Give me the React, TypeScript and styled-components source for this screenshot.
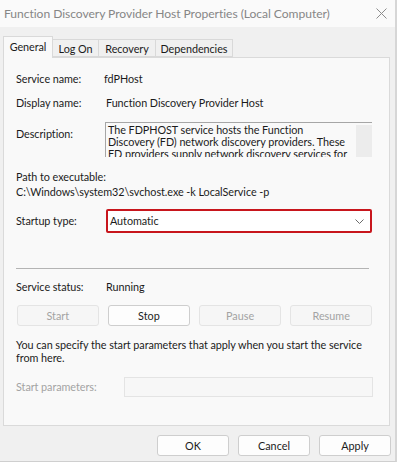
import * as React from "react";
import styled, { createGlobalStyle } from "styled-components";

const GlobalStyle = createGlobalStyle`
  html, body {
    margin: 0;
    padding: 0;
    background: #f0f0f0;
  }
  body {
    font-family: Lato, "Noto Sans", sans-serif;
  }
`;

const Window = styled.div`
  width: 397px;
  height: 462px;
  box-sizing: border-box;
  background: #f0f0f0;
  border-right: 2px solid #d6d6d6;
  border-bottom: 1px solid #cfcfcf;
  display: flex;
  flex-direction: column;
  font-size: 10.8px;
  letter-spacing: -0.05px;
  color: #1b1b1b;
`;

const TitleBar = styled.div`
  height: 27px;
  flex: none;
  background: #fafafa;
  display: flex;
  align-items: center;
  justify-content: space-between;
  padding: 0 8px 0 4px;
`;

const Title = styled.span`
  font-size: 12.1px;
  color: #868686;
  white-space: nowrap;
`;

const TabStrip = styled.div`
  display: flex;
  align-items: flex-end;
  height: 21px;
  margin-top: 9px;
  padding-left: 3px;
  position: relative;
  z-index: 1;
`;

const Tab = styled.div<{ $active?: boolean; $width: number }>`
  box-sizing: border-box;
  width: ${(p) => p.$width}px;
  height: ${(p) => (p.$active ? "22px" : "18px")};
  margin-bottom: ${(p) => (p.$active ? "-1px" : "0")};
  padding-bottom: ${(p) => (p.$active ? "3px" : "0")};
  border: 1px solid #d9d9d9;
  border-bottom: ${(p) => (p.$active ? "none" : "1px solid #d9d9d9")};
  border-left: ${(p) => (p.$active ? "1px solid #d9d9d9" : "none")};
  background: ${(p) => (p.$active ? "#f9f9f9" : "#f0f0f0")};
  display: flex;
  align-items: center;
  justify-content: center;
  white-space: nowrap;
`;

const Panel = styled.div`
  box-sizing: border-box;
  height: 369px;
  margin: 0 5px 0 3px;
  background: #f9f9f9;
  border: 1px solid #dadada;
  padding: 13px 17px 0 12px;
  display: flex;
  flex-direction: column;
`;

const InfoRow = styled.div<{ $top?: number; $label?: number }>`
  display: grid;
  grid-template-columns: ${(p) => p.$label ?? 88}px 1fr;
  align-items: center;
  line-height: 16px;
  margin-top: ${(p) => p.$top ?? 0}px;
  white-space: nowrap;
`;

const Label = styled.span<{ $disabled?: boolean; $offset?: number }>`
  color: ${(p) => (p.$disabled ? "#a3a3a3" : "#1b1b1b")};
  align-self: ${(p) => (p.$offset ? "start" : "center")};
  margin-top: ${(p) => p.$offset ?? 0}px;
`;

const Value = styled.span<{ $shift?: number }>`
  margin-left: ${(p) => p.$shift ?? 0}px;
`;

const DescBox = styled.div`
  margin-left: 1px;
  height: 35px;
  box-sizing: border-box;
  border-top: 1px solid #a6a6a6;
  border-left: 1px solid #a6a6a6;
  display: flex;
  overflow: hidden;
`;

const DescText = styled.div`
  flex: 1;
  padding: 1px 0 0 2px;
  line-height: 12px;
  white-space: nowrap;
`;

const ScrollTrack = styled.div`
  width: 16px;
  flex: none;
  margin-top: 2px;
  height: 32px;
  background: #ececec;
`;

const Block = styled.div<{ $top?: number }>`
  margin-top: ${(p) => p.$top ?? 0}px;
  line-height: 15px;
  white-space: nowrap;
`;

const Select = styled.div`
  margin-left: 2px;
  height: 24px;
  box-sizing: border-box;
  border: 2px solid #c8161d;
  border-radius: 2px;
  background: #ffffff;
  display: flex;
  align-items: center;
  justify-content: space-between;
  padding: 0 6px 0 2px;
`;

const Divider = styled.div<{ $top: number }>`
  margin-top: ${(p) => p.$top}px;
  height: 1px;
  width: 353px;
  background: #b4b4b4;
`;

const ButtonRow = styled.div`
  margin-top: 10px;
  margin-left: 1px;
  width: 355px;
  display: grid;
  grid-template-columns: repeat(4, 1fr);
  gap: 9.5px;
`;

const Button = styled.button<{ $disabled?: boolean }>`
  height: 21px;
  box-sizing: border-box;
  padding: 0;
  font-family: inherit;
  font-size: 10.8px;
  border-radius: 3px;
  border: 1px solid ${(p) => (p.$disabled ? "#e4e4e4" : "#cecece")};
  background: ${(p) => (p.$disabled ? "#f6f6f6" : "#fdfdfd")};
  color: ${(p) => (p.$disabled ? "#a3a3a3" : "#1b1b1b")};
`;

const Paragraph = styled.p`
  margin: 12px 0 0;
  line-height: 13px;
  width: 360px;
`;

const ParamInput = styled.div`
  height: 20px;
  box-sizing: border-box;
  border: 1px solid #e4e4e4;
  background: #f7f7f7;
  width: 249px;
`;

const Footer = styled.div`
  display: flex;
  justify-content: flex-end;
  gap: 9px;
  margin-top: 9px;
  padding-right: 4px;
`;

const FooterButton = styled(Button)`
  width: 72px;
`;

const CloseIcon = () => (
  <svg width="11" height="11" viewBox="0 0 11 11">
    <path d="M0.5 0.5 L10.5 10.5 M10.5 0.5 L0.5 10.5" stroke="#8c8c8c" strokeWidth="1" fill="none" />
  </svg>
);

const Chevron = () => (
  <svg width="9" height="5" viewBox="0 0 9 5">
    <path d="M0.5 0.5 L4.5 4.5 L8.5 0.5" stroke="#6a6a6a" strokeWidth="1" fill="none" />
  </svg>
);

const tabs = [
  { name: "General", width: 50 },
  { name: "Log On", width: 46 },
  { name: "Recovery", width: 57 },
  { name: "Dependencies", width: 77 },
];

const App: React.FC = () => {
  return (
    <Window>
      <GlobalStyle />
      <TitleBar>
        <Title>Function Discovery Provider Host Properties (Local Computer)</Title>
        <CloseIcon />
      </TitleBar>
      <TabStrip>
        {tabs.map((t, i) => (
          <Tab key={t.name} $active={i === 0} $width={t.width}>
            {t.name}
          </Tab>
        ))}
      </TabStrip>
      <Panel>
        <InfoRow>
          <Label>Service name:</Label>
          <Value>fdPHost</Value>
        </InfoRow>
        <InfoRow $top={8}>
          <Label>Display name:</Label>
          <Value $shift={2}>Function Discovery Provider Host</Value>
        </InfoRow>
        <InfoRow $top={11}>
          <Label $offset={4}>Description:</Label>
          <DescBox>
            <DescText>
              The FDPHOST service hosts the Function
              <br />
              Discovery (FD) network discovery providers. These
              <br />
              FD providers supply network discovery services for
            </DescText>
            <ScrollTrack />
          </DescBox>
        </InfoRow>
        <Block $top={12}>Path to executable:</Block>
        <Block>C:\Windows\system32\svchost.exe -k LocalService -p</Block>
        <InfoRow $top={10}>
          <Label>Startup type:</Label>
          <Select>
            <span>Automatic</span>
            <Chevron />
          </Select>
        </InfoRow>
        <Divider $top={35} />
        <InfoRow $top={10}>
          <Label>Service status:</Label>
          <Value $shift={2}>Running</Value>
        </InfoRow>
        <ButtonRow>
          <Button $disabled>Start</Button>
          <Button>Stop</Button>
          <Button $disabled>Pause</Button>
          <Button $disabled>Resume</Button>
        </ButtonRow>
        <Paragraph>
          You can specify the start parameters that apply when you start the service from here.
        </Paragraph>
        <InfoRow $top={13} $label={108}>
          <Label $disabled>Start parameters:</Label>
          <ParamInput />
        </InfoRow>
      </Panel>
      <Footer>
        <FooterButton>OK</FooterButton>
        <FooterButton>Cancel</FooterButton>
        <FooterButton>Apply</FooterButton>
      </Footer>
    </Window>
  );
};

export default App;
